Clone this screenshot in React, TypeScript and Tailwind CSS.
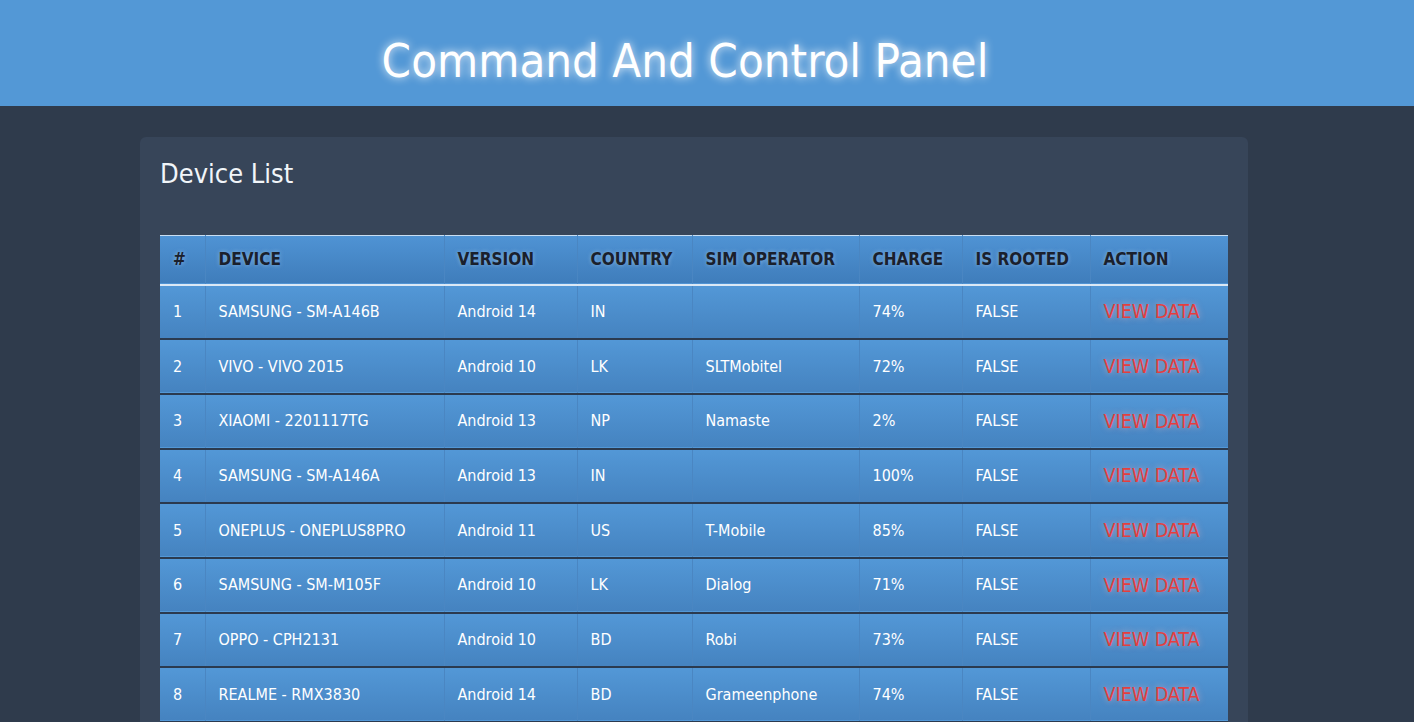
import React from 'react';

type Device = {
  id: number;
  device: string;
  version: string;
  country: string;
  sim: string;
  charge: string;
  rooted: string;
};

const DEVICES: Device[] = [
  { id: 1, device: 'SAMSUNG - SM-A146B', version: 'Android 14', country: 'IN', sim: '', charge: '74%', rooted: 'FALSE' },
  { id: 2, device: 'VIVO - VIVO 2015', version: 'Android 10', country: 'LK', sim: 'SLTMobitel', charge: '72%', rooted: 'FALSE' },
  { id: 3, device: 'XIAOMI - 2201117TG', version: 'Android 13', country: 'NP', sim: 'Namaste', charge: '2%', rooted: 'FALSE' },
  { id: 4, device: 'SAMSUNG - SM-A146A', version: 'Android 13', country: 'IN', sim: '', charge: '100%', rooted: 'FALSE' },
  { id: 5, device: 'ONEPLUS - ONEPLUS8PRO', version: 'Android 11', country: 'US', sim: 'T-Mobile', charge: '85%', rooted: 'FALSE' },
  { id: 6, device: 'SAMSUNG - SM-M105F', version: 'Android 10', country: 'LK', sim: 'Dialog', charge: '71%', rooted: 'FALSE' },
  { id: 7, device: 'OPPO - CPH2131', version: 'Android 10', country: 'BD', sim: 'Robi', charge: '73%', rooted: 'FALSE' },
  { id: 8, device: 'REALME - RMX3830', version: 'Android 14', country: 'BD', sim: 'Grameenphone', charge: '74%', rooted: 'FALSE' },
];

const COLUMNS = [
  { label: '#', width: 'w-[45px]' },
  { label: 'DEVICE', width: 'w-[239px]' },
  { label: 'VERSION', width: 'w-[133px]' },
  { label: 'COUNTRY', width: 'w-[115px]' },
  { label: 'SIM OPERATOR', width: 'w-[167px]' },
  { label: 'CHARGE', width: 'w-[103px]' },
  { label: 'IS ROOTED', width: 'w-[128px]' },
  { label: 'ACTION', width: 'w-[138px]' },
];

const cell = 'border-l border-[#4a86c2] first:border-l-0 px-[13px] align-middle';

export default function App() {
  return (
    <div className="min-h-screen bg-[#2f3b4c] font-['DejaVu_Sans_Condensed','DejaVu_Sans',sans-serif] text-white">
      <header className="h-[106px] bg-[#5398d6] flex items-center justify-center">
        <h1 className="mr-[44px] mt-[14px] text-[47px] leading-none text-white [text-shadow:0_0_8px_rgba(255,255,255,0.9)]">
          Command And Control Panel
        </h1>
      </header>

      <main className="px-[140px] pt-[31px]">
        <section className="w-[1108px] rounded-[6px] bg-[#374559] px-5 pt-[23px] pb-5">
          <h2 className="text-[27px] leading-none text-[#f1f5f9] mb-[48px]">Device List</h2>

          <table className="w-full table-fixed border-collapse border-t border-[#c9def2] text-[16px]">
            <thead>
              <tr className="h-[49px] bg-gradient-to-b from-[#4f93d4] to-[#3f7dbb] border-b-2 border-[#dbe8f5]">
                {COLUMNS.map((col) => (
                  <th
                    key={col.label}
                    className={`${cell} ${col.width} text-left text-[17px] font-bold text-[#1a202c] [text-shadow:0_0_4px_rgba(180,210,240,0.6)]`}
                  >
                    {col.label}
                  </th>
                ))}
              </tr>
            </thead>
            <tbody>
              {DEVICES.map((d) => (
                <tr
                  key={d.id}
                  className="h-[54.7px] bg-gradient-to-b from-[#5398d7] to-[#4583c0] border-b-2 border-[#2b3a4f]"
                >
                  <td className={cell}>{d.id}</td>
                  <td className={cell}>{d.device}</td>
                  <td className={cell}>{d.version}</td>
                  <td className={cell}>{d.country}</td>
                  <td className={cell}>{d.sim}</td>
                  <td className={cell}>{d.charge}</td>
                  <td className={cell}>{d.rooted}</td>
                  <td className={cell}>
                    <a className="text-[19.5px] text-[#e53e3e] [text-shadow:0_0_6px_rgba(255,180,180,0.7)]">
                      VIEW DATA
                    </a>
                  </td>
                </tr>
              ))}
            </tbody>
          </table>
        </section>
      </main>
    </div>
  );
}
